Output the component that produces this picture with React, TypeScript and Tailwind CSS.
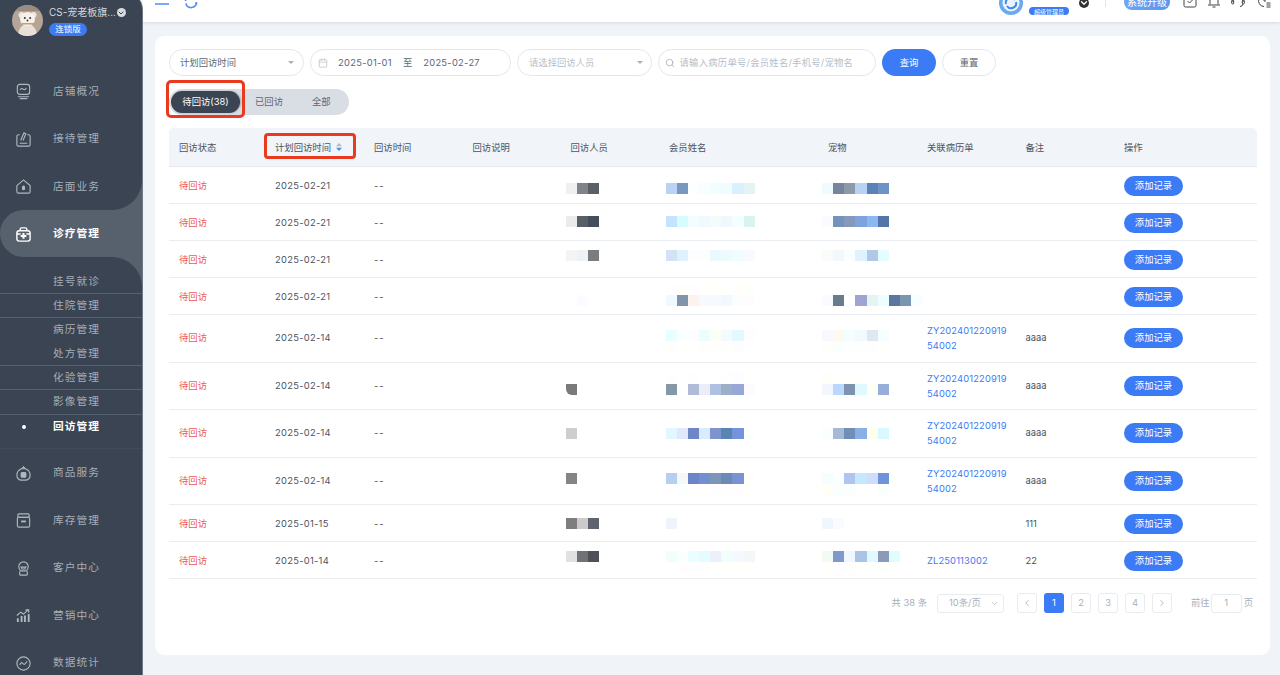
import { Calendar, ChevronDown, ChevronLeft, ChevronRight, Search } from 'lucide-react';
import type { ReactNode } from 'react';

const COLUMNS = 'grid grid-cols-[96px_99px_98.5px_98px_98.5px_159px_99px_98.5px_98.5px_143px]';

const ICON_PATHS: Record<string, ReactNode> = {
  overview: (
    <>
      <rect x="2.5" y="1.5" width="13" height="10.5" rx="2.5" />
      <path d="M5.5 7.5c1-2 2-2 3-1s2 1 3.500-1" />
      <path d="M3 14.500h12M5 16.500h8" />
    </>
  ),
  reception: (
    <>
      <path d="M5 4H3.500a1.500 1.500 0 0 0-1.500 1.500v9A1.500 1.500 0 0 0 3.500 16h11a1.500 1.500 0 0 0 1.500-1.500v-9A1.500 1.500 0 0 0 14.500 4H13" />
      <path d="M6 10l3.500-8 2 1-3 7M5 13h8" />
    </>
  ),
  store: (
    <>
      <path d="M2 8l7-6 7 6v6.500a1.500 1.500 0 0 1-1.500 1.500h-11A1.500 1.500 0 0 1 2 14.500z" />
      <rect x="8" y="8.500" width="2" height="4" rx="1" fill="currentColor" />
    </>
  ),
  medical: (
    <>
      <path d="M5.500 5V3.500A1.500 1.500 0 0 1 7 2h4a1.500 1.500 0 0 1 1.500 1.500V5" strokeWidth="1.500" />
      <rect x="2" y="5" width="14" height="11" rx="2.500" strokeWidth="1.500" />
      <path d="M2 8.500h4M12 8.500h4" strokeWidth="1.500" />
      <path d="M9 7.500v6M6 10.500h6" strokeWidth="2.200" />
    </>
  ),
  goods: (
    <>
      <path d="M7 4c-3 1-5 4-5 7a5 5 0 0 0 5 5h4a5 5 0 0 0 5-5c0-3-2-6-5-7z" />
      <path d="M7 4l2-2 2 2" />
      <rect x="6.500" y="8" width="5" height="5" rx="1" fill="currentColor" />
    </>
  ),
  stock: (
    <>
      <rect x="3" y="2" width="12" height="3.500" rx="1.200" />
      <rect x="2.500" y="5.500" width="13" height="10.500" rx="1.500" />
      <path d="M6.500 10h5" strokeWidth="2" />
    </>
  ),
  customer: (
    <>
      <path d="M4 7a5 5 0 0 1 10 0c0 2-1 3.500-2 4.500H6C5 10.500 4 9 4 7z" />
      <path d="M6.500 7.500h5l-1 2h-3zM5 12v3a1 1 0 0 0 1 1h6a1 1 0 0 0 1-1v-3" />
    </>
  ),
  marketing: (
    <>
      <path d="M2 9l4-3.500 3 2 5-4.500M11 3h3.500v3" />
      <path d="M3 16v-4M7 16V9.500M10.500 16V9M14.500 16V7.500" strokeWidth="2" />
    </>
  ),
  stats: (
    <>
      <circle cx="9" cy="9" r="7" />
      <path d="M5 10.500c1-2 2-3 3-2s1.500 2 2.500 1 1.500-2 2.500-2.500" />
    </>
  ),
};

function NavIcon({ name }: { name: string }) {
  return (
    <svg viewBox="0 0 18 18" fill="none" stroke="currentColor" strokeWidth="1.2" className="h-[17px] w-[17px] shrink-0">
      {ICON_PATHS[name]}
    </svg>
  );
}

function NavItem({ icon, label, active }: { icon: string; label: string; active?: boolean }) {
  return (
    <div className={`flex h-[47.500px] items-center gap-[21px] pl-[15px] pt-[2px] text-[10.700px] tracking-[1.100px] ${active ? 'font-semibold text-white' : 'text-[#a6aeb9]'}`}>
      <span className={active ? 'text-white' : 'text-[#b0b7c1]'}>
        <NavIcon name={icon} />
      </span>
      {label}
    </div>
  );
}

function SubItem({ label, active, line }: { label: string; active?: boolean; line?: boolean }) {
  return (
    <div className={`flex h-[24.100px] items-center pl-[53px] text-[10.700px] tracking-[1.100px] ${line ? 'border-b border-[#566170]' : ''} ${active ? 'font-semibold text-white' : 'text-[#a6aeb9]'}`}>
      {active && <span className="mr-[27.500px] -ml-[31.500px] h-[4px] w-[4px] rounded-full bg-white" />}
      {label}
    </div>
  );
}

function Sidebar() {
  return (
    <aside className="-mt-[8px] h-[683px] w-[143px] shrink-0 overflow-hidden rounded-tr-[18px] border-r border-[#6f7882] bg-[#57616d]">
      <div className="rounded-br-[30px] bg-[#3a4452]">
        <div className="flex h-[75px] items-start gap-[6px] pl-[12px] pt-[13px]">
          <svg viewBox="0 0 31 31" className="h-[31px] w-[31px] shrink-0 rounded-full">
            <rect width="31" height="31" fill="#b5a498" />
            <path d="M0 0h31v6H0z" fill="#9a8c80" />
            <path d="M6 31c0-7 4-12 9.500-12S25 24 25 31z" fill="#e9e1d8" />
            <circle cx="9.500" cy="10" r="3" fill="#efe6dc" />
            <circle cx="21.500" cy="10" r="3" fill="#efe6dc" />
            <ellipse cx="15.500" cy="14" rx="7.500" ry="7" fill="#f6f1ea" />
            <circle cx="12.800" cy="13" r="1" fill="#3a3431" />
            <circle cx="18.200" cy="13" r="1" fill="#3a3431" />
            <circle cx="15.500" cy="15.500" r="0.900" fill="#3a3431" />
            <path d="M10 18h17v1.600H10z" fill="#c9a06a" />
          </svg>
          <div>
            <div className="flex items-center gap-px pt-px text-[10px] leading-[13px] text-[#d5d9de]">
              CS-宠老板旗...
              <span className="flex h-[9px] w-[9px] items-center justify-center rounded-full bg-[#d8dbde] text-[#3a4452]">
                <ChevronDown size={8} strokeWidth={3} />
              </span>
            </div>
            <div className="mt-[4px] flex h-[13px] w-[38px] items-center justify-center rounded-full bg-[#3b7bf6] text-[8.500px] text-white">连锁版</div>
          </div>
        </div>
        <NavItem icon="overview" label="店铺概况" />
        <NavItem icon="reception" label="接待管理" />
        <NavItem icon="store" label="店面业务" />
      </div>
      <div className="bg-[#3a4452]">
        <div className="rounded-l-[24px] bg-[#57616d]">
          <NavItem icon="medical" label="诊疗管理" active />
        </div>
      </div>
      <div className="h-full rounded-tr-[30px] bg-[#3a4452]">
        <div className="border-b border-[#414b59] pb-[9px] pt-[13px]">
          <SubItem label="挂号就诊" line />
          <SubItem label="住院管理" line />
          <SubItem label="病历管理" />
          <SubItem label="处方管理" line />
          <SubItem label="化验管理" line />
          <SubItem label="影像管理" line />
          <SubItem label="回访管理" active />
        </div>
        <NavItem icon="goods" label="商品服务" />
        <NavItem icon="stock" label="库存管理" />
        <NavItem icon="customer" label="客户中心" />
        <NavItem icon="marketing" label="营销中心" />
        <NavItem icon="stats" label="数据统计" />
      </div>
    </aside>
  );
}

function TopBar() {
  return (
    <header className="z-10 flex h-[22px] shrink-0 items-end overflow-hidden bg-white pb-[14px] pl-[12px] pr-[9px] shadow-[0_1px_3px_rgba(90,100,120,0.18)]">
      <svg viewBox="0 0 14 14" className="mb-[2px] h-[14px] w-[14px] text-[#4f8ff0]" fill="none" stroke="currentColor" strokeWidth="1.500">
        <path d="M0 2h14M0 7h14M0 12h14" />
      </svg>
      <svg viewBox="0 0 14 14" className="-mb-[1px] ml-[15px] h-[14px] w-[14px] text-[#4f8ff0]" fill="none" stroke="currentColor" strokeWidth="1.600">
        <path d="M12.500 8a5.600 5.600 0 0 1-10.500 1.500M1.500 6A5.600 5.600 0 0 1 12 4.500M12.500 9.500V8h-1.500M1.500 9h1.500" />
      </svg>
      <div className="flex-1" />
      <svg viewBox="0 0 24 24" className="-mb-[7px] h-[24px] w-[24px]">
        <circle cx="12" cy="12" r="12" fill="#6aa8f0" />
        <circle cx="12" cy="12" r="8.500" fill="#eaf3fe" />
        <path d="M7 13a5 5 0 0 1 9-4M17 11a5 5 0 0 1-9 4" fill="none" stroke="#3f8be8" strokeWidth="2" />
      </svg>
      <span className="-mb-[7px] ml-[6px] flex h-[8px] w-[40px] items-center justify-center whitespace-nowrap rounded-full bg-[#3b7bf6] text-[6px] text-white">超级管理员</span>
      <span className="ml-[10px] h-[10px] w-[10px] rounded-full bg-[#333] text-white">
        <ChevronDown size={10} strokeWidth={3} />
      </span>
      <span className="mb-[1px] ml-[16px] h-[10px] w-px bg-[#e3e6ea]" />
      <span className="-mb-[2px] ml-[18px] flex h-[16px] w-[46px] items-center justify-center rounded-full bg-gradient-to-r from-[#6ea6f5] to-[#5b95ec] text-[10px] text-white">系统升级</span>
      <svg viewBox="0 0 14 14" className="ml-[13px] h-[14px] w-[14px] text-[#444]" fill="none" stroke="currentColor">
        <rect x="1" y="1" width="12" height="12" rx="1.500" />
        <path d="M4.500 7l2 2 3-3" />
      </svg>
      <svg viewBox="0 0 14 14" className="ml-[10px] h-[14px] w-[14px] text-[#444]" fill="none" stroke="currentColor">
        <path d="M3 10.500V5a4 4 0 0 1 8 0v5.500M1 11h12M5.500 13h3" />
      </svg>
      <svg viewBox="0 0 14 14" className="ml-[10px] h-[14px] w-[14px] text-[#444]" fill="none" stroke="currentColor">
        <path d="M2 8V6a5 5 0 0 1 10 0v2" />
        <rect x="0.700" y="6" width="2" height="4" rx="1" />
        <rect x="11.300" y="6" width="2" height="4" rx="1" />
        <path d="M12 10a3 3 0 0 1-3 2.500" />
      </svg>
      <svg viewBox="0 0 14 14" className="ml-[12px] h-[14px] w-[14px] text-[#444]" fill="none" stroke="currentColor">
        <path d="M7 12.500A5.500 5.500 0 1 1 12.500 6" />
        <path d="M7 3.500V7h2M9.500 9h4M9.500 11h4M9.500 13h4" />
      </svg>
    </header>
  );
}

function FilterBox({ className, children }: { className: string; children: ReactNode }) {
  return (
    <div className={`flex h-[27px] shrink-0 items-center rounded-full border border-[#e2e6ec] bg-white ${className}`}>
      {children}
    </div>
  );
}

function Caret() {
  return <span className="ml-auto h-0 w-0 border-x-[3px] border-t-[3.500px] border-x-transparent border-t-[#a8b0bb]" />;
}

function Filters() {
  return (
    <div className="flex gap-[6px]">
      <FilterBox className="w-[135px] pl-[10px] pr-[9px] text-[#5e6672]">
        计划回访时间
        <Caret />
      </FilterBox>
      <FilterBox className="w-[201px] pl-[7px] text-[#5e6672]">
        <Calendar size={10} className="text-[#c0c6cf]" />
        <span className="ml-[10px] tracking-[0.300px]">2025-01-01</span>
        <span className="ml-[11px]">至</span>
        <span className="ml-[11px] tracking-[0.300px]">2025-02-27</span>
      </FilterBox>
      <FilterBox className="w-[135px] pl-[11px] pr-[8px] text-[#b7bec8]">
        请选择回访人员
        <Caret />
      </FilterBox>
      <FilterBox className="w-[218px] pl-[6px] tracking-[0.250px] text-[#b7bec8]">
        <Search size={10} className="mr-[4.500px] text-[#a8b0bb]" />
        请输入病历单号/会员姓名/手机号/宠物名
      </FilterBox>
      <button className="h-[27px] w-[54px] rounded-full bg-[#3b7bf6] text-white">查询</button>
      <button className="h-[27px] w-[54px] rounded-full border border-[#e2e6ec] bg-white text-[#5e6672]">重置</button>
    </div>
  );
}

function Tabs() {
  return (
    <div className="relative mt-[13px] flex h-[26px] w-[180px] items-center rounded-full bg-[#d9dee4] pl-[2px] text-[#5e6672]">
      <span className="flex h-[22px] w-[69px] items-center justify-center rounded-full bg-[#3a4452] text-white shadow-[1px_0_2px_rgba(0,0,0,0.25)]">待回访(38)</span>
      <span className="ml-[15px]">已回访</span>
      <span className="ml-[29px]">全部</span>
      <span className="absolute -left-[3px] -top-[9px] h-[38px] w-[79px] rounded-[5px] border-[3px] border-[#ea3a1e]" />
    </div>
  );
}

type RowData = {
  date: string;
  staff: string[];
  member: string[];
  pet: string[];
  nudge?: string;
  above?: [string[], string[]];
  below?: [string[], string[]];
  record?: [string, string?];
  note?: string;
  tall?: boolean;
  clip?: boolean;
};

const ROWS: RowData[] = [
  {
    date: '2025-02-21',
    nudge: 'mt-[5px]',
    staff: ['#f0f0f0', '#80848a', '#5b6066'],
    member: ['#b9d3f7', '#7899bf', '#fcfeff', '#f6feff', '#f0feff', '#effdff', '#d8f1fe', '#e6f3f3'],
    pet: ['#effcff', '#75859c', '#8d99a9', '#b8d2f6', '#5a82b6', '#6d94c9'],
  },
  {
    date: '2025-02-21',
    nudge: 'mb-[2px]',
    staff: ['#ebebeb', '#575f69', '#454e5c'],
    member: ['#c5e3fe', '#d5fdff', '#f2fdff', '#f0f9fe', '#f4fbfb', '#f2f7fe', '#f2feff', '#daf3ef'],
    pet: ['#fafbff', '#7493bb', '#8499bb', '#7ea4e0', '#8cb8f2', '#5476a6'],
  },
  {
    date: '2025-02-21',
    nudge: 'mb-[8px]',
    staff: ['#f4f4f4', '#eff2f4', '#7a7d80'],
    member: ['#d2e3f4', '#dcf2fe', '#fafeff', '#fffcff', '#e9fafe', '#edfbfd', '#effdff', '#f8faff'],
    pet: ['#f8fdf8', '#f1f8fe', '#fbfeff', '#dff2fe', '#b0c9e8', '#e6fdff'],
  },
  {
    date: '2025-02-21',
    nudge: 'mt-[8px]',
    staff: ['#ffffff', '#fbfcff', '#ffffff'],
    member: ['#eefaff', '#8194ac', '#fdf2ee', '#f6f9ff', '#f6f9ff', '#f1f8fe', '#fafffe', '#fffcfe'],
    pet: ['#f9fbff', '#687c8d', '#ffffff', '#9ea5d1', '#e3f5f2', '#ecfeff', '#5a779f', '#7a95ae', '#f6ffff'],
    above: [['#fffdff', '#fffffa', '#fffdfe', '#fffffc', '#fffffc', '#fffffd', '#fffefd', '#fffffa'], []],
  },
  {
    date: '2025-02-14',
    nudge: 'mt-[16px]',
    staff: [],
    member: ['#fefefd', '#fffffc', '#fffffd', '#fffefc', '#fffefd', '#fffefc', '#fdfdff', '#fffffd'],
    pet: ['#fffffa', '#f9feff', '#fcfeff', '#fdfefd', '#fefefd', '#fffffb'],
    above: [['#e9feff', '#fdfeff', '#fffcff', '#ebfeff', '#fbfff4', '#f2fbff', '#e6f8ff', '#fdfdff'], ['#f9f8ff', '#fff8ee', '#f4feff', '#f2f9ff', '#dce9f2', '#f4ffff']],
    record: ['ZY202401220919', '54002'],
    note: 'aaaa',
    tall: true,
  },
  {
    date: '2025-02-14',
    nudge: 'mt-[7px]',
    staff: ['#7a7a78'],
    member: ['#8697a8', '#ffffff', '#b0bbd8', '#e9eef9', '#afc1e3', '#9bb0c8', '#99a7d6', '#fdfbff'],
    pet: ['#f3f6fe', '#bad8fe', '#7e93b0', '#e0f9ff', '#fffffa', '#97aedb'],
    above: [['#fdffff', '#fffffd', '#fdfffd', '#fefffe', '#fefffe', '#fffeff', '#fffcff', '#fffffd'], ['#fffffa', '#fffffd', '#fffffc', '#fffffc', '#ffffff', '#ffffff']],
    record: ['ZY202401220919', '54002'],
    note: 'aaaa',
    tall: true,
    clip: true,
  },
  {
    date: '2025-02-14',
    staff: ['#cecece'],
    member: ['#e0f8ff', '#e0e9fb', '#6f86c6', '#d8ecfe', '#7f93ce', '#5a85b2', '#7393dc', '#fcfffc'],
    pet: ['#fafeff', '#a5bad4', '#708eb6', '#89b0e4', '#fffff0', '#d9f8ff'],
    record: ['ZY202401220919', '54002'],
    note: 'aaaa',
    tall: true,
  },
  {
    date: '2025-02-14',
    nudge: 'mb-[4px]',
    staff: ['#858585'],
    member: ['#b8cfeb', '#f4f9f8', '#6d84c8', '#7290d0', '#7c95b8', '#6a8cb4', '#7a92d4', '#fffffa'],
    pet: ['#f6fdff', '#fbffff', '#afc4ee', '#c4e9ff', '#d0dcff', '#6f93d8'],
    below: [['#fefffe', '#fbfffd', '#fffffd', '#fffffd', '#fffeff', '#fffeff', '#fffdff', '#fffffd'], ['#fffff8', '#fbfeff', '#fbfeff', '#fffffd', '#fefffe', '#fbfffb']],
    record: ['ZY202401220919', '54002'],
    note: 'aaaa',
    tall: true,
  },
  {
    date: '2025-01-15',
    staff: ['#7e7e7e', '#cbcbcb', '#5f6370'],
    member: ['#eff4fb'],
    pet: ['#eff6fe', '#fafbff'],
    note: '111',
  },
  {
    date: '2025-01-14',
    nudge: 'mb-[8px]',
    staff: ['#e1e1e1', '#707276', '#4e5258'],
    member: ['#f0fff8', '#fafeff', '#eafdff', '#e2fcff', '#ecf0fb', '#f0fffb', '#f3f9ff', '#f5f6f8'],
    pet: ['#f1fbf3', '#8099cd', '#eff8ff', '#a9c4e6', '#e0f8ff', '#8a9ab8', '#dffdff'],
    below: [['#ffffff', '#fffefd', '#fffeff', '#fffeff', '#fffffd', '#fffffc', '#fffffc', '#fffffd'], ['#fffffc', '#fffdff', '#fffeff', '#fffffd', '#fffffd', '#fdfffd', '#fffffd']],
    record: ['ZL250113002'],
    note: '22',
  },
];

function Strip({ colors, clip }: { colors: string[]; clip?: boolean }) {
  return (
    <div className="flex h-[11px]">
      {colors.map((c, i) => (
        <span key={i} className={`h-full w-[11.170px] ${clip ? 'rounded-bl-[6px]' : ''}`} style={{ background: c }} />
      ))}
    </div>
  );
}

// zero-height cell so the blurred strips never stretch the row
function Mosaic({ colors, above, below, clip, nudge, inset }: { colors: string[]; above?: string[]; below?: string[]; clip?: boolean; nudge?: string; inset: string }) {
  return (
    <div className={`flex h-0 items-center ${inset}`}>
      <div className={nudge}>
        <Strip colors={above ?? []} />
        <Strip colors={colors} clip={clip} />
        <Strip colors={below ?? []} />
      </div>
    </div>
  );
}

function Table() {
  return (
    <div className="mt-[13px] text-[#4b5360]">
      <div className={`${COLUMNS} h-[39px] items-center rounded-t-[5px] border-b border-[#e6eaef] bg-[#f1f4f8] pt-px`}>
        {['回访状态', '计划回访时间', '回访时间', '回访说明', '回访人员', '会员姓名', '宠物', '关联病历单', '备注', '操作'].map((h, i) => (
          <div key={h} className={`pl-[10px] ${i === 1 ? 'relative flex items-center' : ''}`}>
            {h}
            {i === 1 && (
              <>
                <svg viewBox="0 0 6 8" className="ml-[5px] h-[8px] w-[6px]">
                  <path d="M3 0l3 3.300H0z" fill="#b3bac4" />
                  <path d="M3 8L0 4.700h6z" fill="#4f8ff0" />
                </svg>
                <span className="absolute -top-[8px] -left-[1px] h-[26px] w-[92px] rounded-[4px] border-[3px] border-[#ea3a1e]" />
              </>
            )}
          </div>
        ))}
      </div>
      {ROWS.map((r, i) => (
        <div key={i} className={`${COLUMNS} ${r.tall ? 'h-[47.500px]' : 'h-[37px] pt-px'} items-center border-b border-[#e9ecf1]`}>
          <div className="pl-[10px] text-[#ee5a5a]">待回访</div>
          <div className="pl-[10px] tracking-[0.300px]">{r.date}</div>
          <div className="pl-[10px] tracking-[1px]">--</div>
          <div />
          <Mosaic inset="pl-[5px]" colors={r.staff} clip={r.clip} nudge={r.nudge} />
          <Mosaic inset="pl-[6.500px]" colors={r.member} above={r.above?.[0]} below={r.below?.[0]} nudge={r.nudge} />
          <Mosaic inset="pl-[4px]" colors={r.pet} above={r.above?.[1]} below={r.below?.[1]} nudge={r.nudge} />
          <div className="pl-[10px] leading-[15px] tracking-[0.150px] text-[#3b7bf6]">
            {r.record?.map((line) => <div key={line}>{line}</div>)}
          </div>
          <div className="pl-[10px]">{r.note}</div>
          <div className="pl-[10px]">
            <button className="h-[20px] w-[59px] rounded-full bg-[#3b7bf6] text-white">添加记录</button>
          </div>
        </div>
      ))}
    </div>
  );
}

function PageBox({ children, active }: { children: ReactNode; active?: boolean }) {
  return (
    <span className={`flex h-[20px] w-[20px] items-center justify-center rounded-[3px] ${active ? 'bg-[#3b7bf6] text-white' : 'border border-[#e8ebef] text-[#a8b0bb]'}`}>
      {children}
    </span>
  );
}

function Pagination() {
  return (
    <div className="mt-[14px] flex items-center justify-end pr-[4px] text-[#a8b0bb]">
      <span>共 38 条</span>
      <span className="ml-[10px] flex h-[19px] w-[67px] items-center rounded-[3px] border border-[#e8ebef] pl-[11px] pr-[4px]">
        10条/页
        <ChevronDown size={9} className="ml-auto" />
      </span>
      <span className="ml-[13px] flex gap-[7px]">
        <PageBox><ChevronLeft size={10} /></PageBox>
        <PageBox active>1</PageBox>
        <PageBox>2</PageBox>
        <PageBox>3</PageBox>
        <PageBox>4</PageBox>
        <PageBox><ChevronRight size={10} /></PageBox>
      </span>
      <span className="ml-[19px]">前往</span>
      <span className="ml-[1px] mr-[2px] flex h-[19px] w-[31px] items-center justify-center rounded-[3px] border border-[#e8ebef]">1</span>
      <span>页</span>
    </div>
  );
}

export default function App() {
  return (
    <div className="flex h-[675px] w-[1280px] overflow-hidden bg-white font-[Inter,'Noto_Sans_CJK_SC',sans-serif] text-[9.330px]">
      <Sidebar />
      <main className="flex min-w-0 flex-1 flex-col bg-[#f0f3f7]">
        <TopBar />
        <div className="ml-[12px] mr-[10px] mt-[14px] h-[619px] rounded-[9px] bg-white pl-[14px] pr-[13px] pt-[13px]">
          <Filters />
          <Tabs />
          <Table />
          <Pagination />
        </div>
      </main>
    </div>
  );
}
